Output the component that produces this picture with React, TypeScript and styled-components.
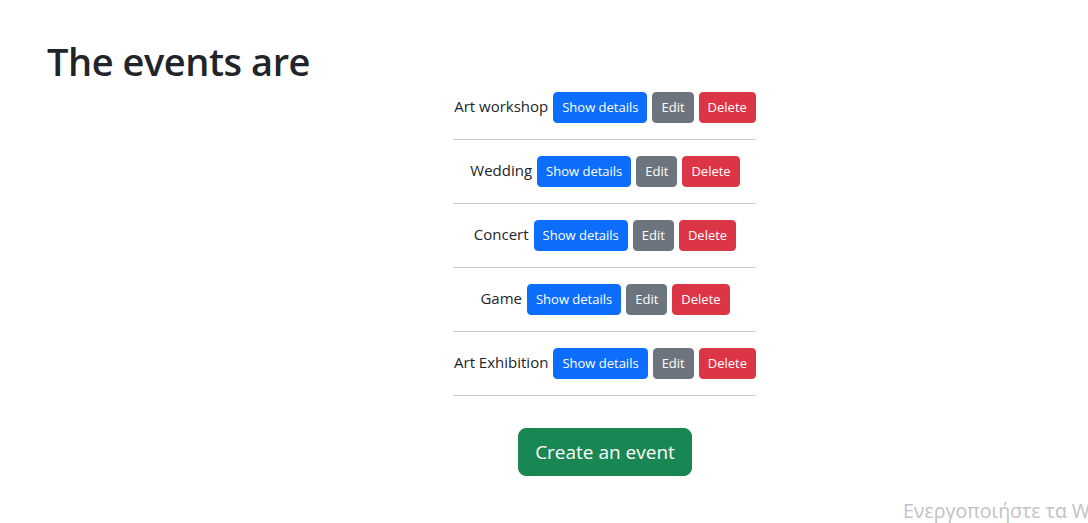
import React from "react";
import styled, { createGlobalStyle } from "styled-components";

const Global = createGlobalStyle`
  html, body { margin: 0; padding: 0; background: #fff; }
  body {
    font-family: "Open Sans", "Noto Sans", sans-serif;
    color: #212529;
    font-size: 16px;
    line-height: 1.5;
  }
`;

const Page = styled.div`
  position: relative;
  width: 1088px;
  height: 523px;
  overflow: hidden;
  padding-top: 38px;
  box-sizing: border-box;
`;

const Heading = styled.h1`
  margin: 0 0 8px 47px;
  font-size: 38px;
  font-weight: 600;
  letter-spacing: -0.45px;
  line-height: 46px;
  color: #212529;
`;

const Center = styled.div`
  display: flex;
  flex-direction: column;
  align-items: center;
  padding-left: 122px;
`;

const List = styled.div`
  width: fit-content;
  display: flex;
  flex-direction: column;
`;

const Row = styled.div`
  display: flex;
  justify-content: center;
  align-items: baseline;
  gap: 5px;
`;

const Label = styled.span`
  font-size: 15px;
`;

const Divider = styled.hr`
  margin: 16px 0;
  border: 0;
  border-top: 1px solid #c8c9ca;
  width: 100%;
`;

const Btn = styled.button<{ $bg: string }>`
  font-family: inherit;
  font-size: 13px;
  line-height: 21px;
  padding: 4px 8px;
  border: 1px solid ${(p) => p.$bg};
  background: ${(p) => p.$bg};
  color: #fff;
  border-radius: 4px;
  cursor: pointer;
`;

const BigBtn = styled.button`
  margin-top: 16px;
  font-family: inherit;
  font-size: 19px;
  line-height: 30px;
  padding: 8px 16px;
  border: 1px solid #198754;
  background: #198754;
  color: #fff;
  border-radius: 8px;
  cursor: pointer;
`;

const Watermark = styled.div`
  position: absolute;
  left: 903px;
  top: 496px;
  font-size: 19.5px;
  color: #c2c2c2;
  white-space: nowrap;
`;

const events = ["Art workshop", "Wedding", "Concert", "Game", "Art Exhibition"];

export default function App() {
  return (
    <Page>
      <Global />
      <Heading>The events are</Heading>
      <Center>
        <List>
          {events.map((e) => (
            <React.Fragment key={e}>
              <Row>
                <Label>{e}</Label>
                <Btn $bg="#0d6efd">Show details</Btn>
                <Btn $bg="#6c757d">Edit</Btn>
                <Btn $bg="#dc3545">Delete</Btn>
              </Row>
              <Divider />
            </React.Fragment>
          ))}
        </List>
        <BigBtn>Create an event</BigBtn>
      </Center>
      <Watermark>Ενεργοποιήστε τα Windows</Watermark>
    </Page>
  );
}
